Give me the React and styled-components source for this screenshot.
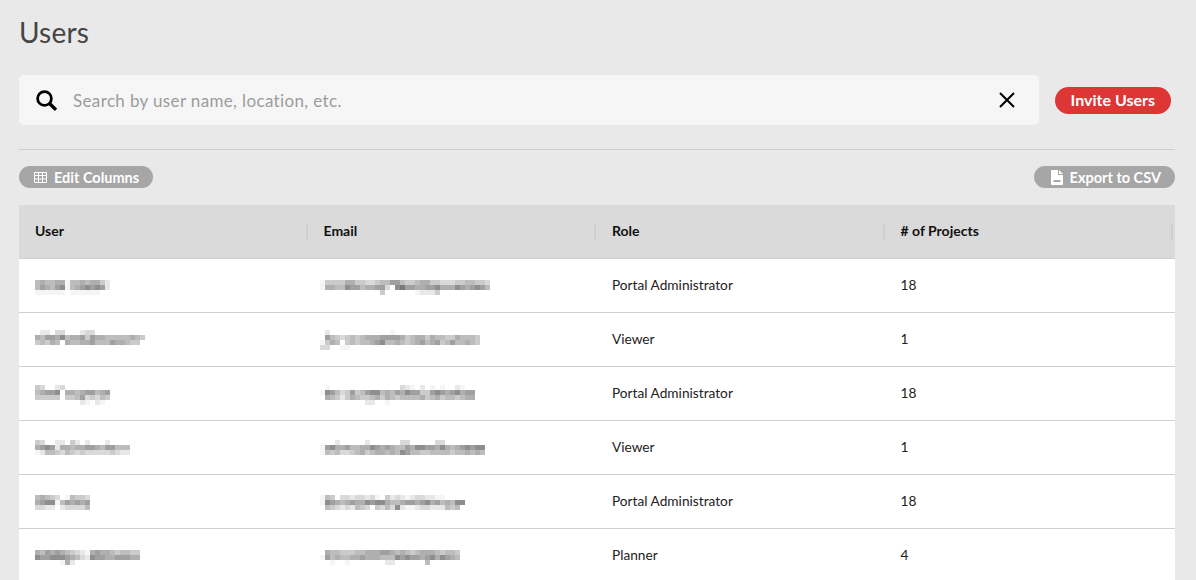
import React from 'react';
import styled, { createGlobalStyle } from 'styled-components';

const GlobalStyle = createGlobalStyle`
  html, body {
    margin: 0;
    height: 100%;
    overflow: hidden;
    background: #e9e9e9;
    font-family: Lato, "Open Sans", sans-serif;
  }
`;

const Page = styled.div`
  height: 580px;
  overflow: hidden;
  padding: 14px 21px 0 19px;
  box-sizing: border-box;
`;

const Title = styled.h1`
  margin: 0;
  height: 37px;
  font-size: 28px;
  line-height: 37px;
  font-weight: 400;
  letter-spacing: 0.2px;
  color: #454545;
`;

const SearchRow = styled.div`
  display: flex;
  align-items: center;
  gap: 16px;
  margin-top: 24px;
  padding-right: 4px;
`;

const SearchBox = styled.div`
  flex: 1;
  height: 50px;
  display: flex;
  align-items: center;
  padding: 0 24px 0 17px;
  background: #f6f6f6;
  border-radius: 5px;
`;

const SearchText = styled.span`
  flex: 1;
  margin-left: 16px;
  font-size: 17px;
  letter-spacing: 0.36px;
  color: #9c9c9c;
`;

const Pill = styled.button`
  display: flex;
  align-items: center;
  gap: 7px;
  height: 22px;
  padding: 0 ${(p) => p.$right}px 0 ${(p) => p.$left}px;
  border: 0;
  border-radius: 11px;
  background: #a6a6a6;
  color: #fff;
  font-family: inherit;
  font-size: 14.5px;
  font-weight: 700;
`;

const InviteButton = styled(Pill)`
  height: 27px;
  padding: 0 16px 2px;
  border-radius: 14px;
  background: #de3535;
  font-size: 16px;
`;

const Divider = styled.hr`
  margin: 24px 0 16px;
  border: 0;
  border-top: 1px solid #cdcdcd;
`;

const Toolbar = styled.div`
  display: flex;
  justify-content: space-between;
`;

const Table = styled.div`
  margin-top: 17px;
`;

const Row = styled.div`
  display: grid;
  grid-template-columns: repeat(4, 1fr);
  height: 54px;
  padding-right: 2px;
  box-sizing: border-box;
  background: ${(p) => (p.$head ? '#dadada' : '#fff')};
  border-bottom: 1px solid #cfcfcf;
`;

const Cell = styled.div`
  display: flex;
  align-items: center;
  padding: 0 0 2px 16px;
  font-size: 13.7px;
  color: #222;
`;

const HeadCell = styled(Cell)`
  position: relative;
  font-weight: 700;
  font-size: 14px;
  color: #111;

  &::after {
    content: '';
    position: absolute;
    right: 0;
    top: 19px;
    width: 2px;
    height: 16px;
    background: #cfcfcf;
  }
`;

const BlurCell = styled(Cell)`
  display: block;
  padding-bottom: 0;
  padding-top: ${(p) => p.$top}px;
`;

const Mosaic = styled.svg`
  display: block;
  margin-left: ${(p) => p.$shift || 0}px;
`;

const levels = ['#ffffff', '#f5f5f5', '#e8e8e8', '#d9d9d9', '#cbcbcb', '#bdbdbd', '#afafaf', '#a0a0a0', '#8e8e8e', '#7a7a7a'];

// each digit is one 5px block of the blurred text
function Blur({ rows, shift }) {
  const width = Math.max(...rows.map((r) => r.length)) * 5;
  return (
    <Mosaic $shift={shift} width={width} height={rows.length * 5} shapeRendering="crispEdges">
      {rows.map((row, y) =>
        row.split('').map((c, x) =>
          c === '0' ? null : <rect key={x + '-' + y} x={x * 5} y={y * 5} width="5" height="5" fill={levels[+c]} />
        )
      )}
    </Mosaic>
  );
}

const people = [
  {
    role: 'Portal Administrator',
    projects: '18',
    top: 21,
    name: ['565566155656642', '576578156787872', '111111011111100'],
    email: [
      '1444466443345577544566443334455443',
      '1665587756677308977667786668767875',
      '0000000000004000000122240000000000',
    ],
  },
  {
    role: 'Viewer',
    projects: '1',
    top: 17,
    name: ['0220330002330000000000', '6577685667476655555654', '4546506556675557665440'],
    email: [
      '0200000000000010000000000000000',
      '07543454566677776456646554465554',
      '14650454556785565456756745755654',
      '33001100000000000000000000000000',
    ],
  },
  {
    role: 'Portal Administrator',
    projects: '18',
    top: 18,
    name: ['430023000000000', '567780665677567', '444440445734354', '000000000210210'],
    email: [
      '0100000000000000321020101002100',
      '1875347457885657687744787678677',
      '0654246544564654555564564554566',
      '0000000002200100000000000000000',
    ],
  },
  {
    role: 'Viewer',
    projects: '1',
    top: 19,
    name: ['4300220420200020000', '6787266566776577555', '1255435434333334322'],
    email: [
      '000200000200000033000003300000000',
      '178667556687676557688776865678788',
      '154533456456656587554455554556565',
    ],
  },
  {
    role: 'Portal Administrator',
    projects: '18',
    top: 20,
    name: ['56543015443', '67881576767', '33220233335'],
    email: [
      '15403323323104232123322110000',
      '18765676687886556776786756588',
      '05432325430435382112332225450',
    ],
  },
  {
    role: 'Planner',
    projects: '4',
    top: 21,
    name: ['657676543216766545544', '877888765328776677766', '000001620000000000000'],
    email: [
      '0655444556667765654566654554',
      '1756556676665558787767868765',
      '0010010000000220000005000000',
    ],
  },
];

const columns = ['User', 'Email', 'Role', '# of Projects'];

export default function App() {
  return (
    <Page>
      <GlobalStyle />
      <Title>Users</Title>
      <SearchRow>
        <SearchBox>
          <svg width="21" height="21" viewBox="0 0 21 21" fill="none" stroke="#000">
            <circle cx="8.5" cy="8.5" r="6.9" strokeWidth="2.8" />
            <path d="M13.5 13.5L20 19.8" strokeWidth="3.4" />
          </svg>
          <SearchText>Search by user name, location, etc.</SearchText>
          <svg width="16" height="16" viewBox="0 0 16 16" stroke="#000" strokeWidth="2">
            <path d="M1 1L15 15M15 1L1 15" />
          </svg>
        </SearchBox>
        <InviteButton>Invite Users</InviteButton>
      </SearchRow>
      <Divider />
      <Toolbar>
        <Pill $left={15} $right={14}>
          <svg width="13" height="11" viewBox="0 0 13 11" fill="none" stroke="#fff">
            <path d="M.5.5h12v10H.5zM.5 3.5h12M.5 7h12M4.5 .5v10M8.5 .5v10" />
          </svg>
          Edit Columns
        </Pill>
        <Pill $left={17} $right={14}>
          <svg width="12" height="15" viewBox="0 0 12 15" fill="#fff">
            <path d="M0 1a1 1 0 0 1 1-1h6v5h5v9a1 1 0 0 1-1 1H1a1 1 0 0 1-1-1z" />
            <path d="M8 0l4 4H8z" />
            <path d="M2.5 10h7v2h-7z" fill="#a6a6a6" />
          </svg>
          Export to CSV
        </Pill>
      </Toolbar>
      <Table>
        <Row $head>
          {columns.map((c) => (
            <HeadCell key={c}>{c}</HeadCell>
          ))}
        </Row>
        {people.map((p, i) => (
          <Row key={i}>
            <BlurCell $top={p.top}>
              <Blur rows={p.name} />
            </BlurCell>
            <BlurCell $top={p.top}>
              <Blur rows={p.email} shift={-4} />
            </BlurCell>
            <Cell>{p.role}</Cell>
            <Cell>{p.projects}</Cell>
          </Row>
        ))}
      </Table>
    </Page>
  );
}
